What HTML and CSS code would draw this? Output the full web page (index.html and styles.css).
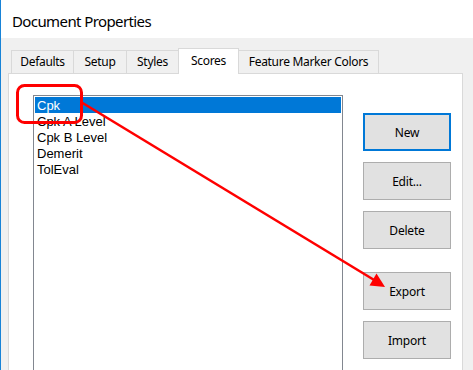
FILE: index.html
```html
<!DOCTYPE html>
<html lang="en">
<head>
  <meta charset="UTF-8">
  <title>Document Properties</title>
  <link rel="stylesheet" href="styles.css">
</head>
<body>
  <div class="window">
    <div class="title-bar">Document Properties</div>

    <div class="dialog">
      <div class="tabs">
        <div class="tab tab-defaults">Defaults</div>
        <div class="tab tab-setup">Setup</div>
        <div class="tab tab-styles">Styles</div>
        <div class="tab tab-scores active">Scores</div>
        <div class="tab tab-colors">Feature Marker Colors</div>
      </div>

      <div class="panel">
        <div class="list-box">
          <div class="list-item selected">Cpk</div>
          <div class="list-item">Cpk A Level</div>
          <div class="list-item">Cpk B Level</div>
          <div class="list-item">Demerit</div>
          <div class="list-item">TolEval</div>
        </div>

        <div class="buttons">
          <button class="btn default">New</button>
          <button class="btn">Edit...</button>
          <button class="btn">Delete</button>
          <button class="btn gap-top">Export</button>
          <button class="btn">Import</button>
        </div>
      </div>
    </div>
  </div>

  <!-- red callout drawn over the dialog -->
  <svg class="annotation" width="473" height="370" viewBox="0 0 473 370">
    <rect x="17.5" y="85.5" width="64" height="37" rx="7" ry="7" fill="none" stroke="#ff0000" stroke-width="3"/>
    <line x1="81" y1="102" x2="375" y2="280.5" stroke="#ff0000" stroke-width="2.6"/>
    <polygon points="385,287 369.5,285.5 376.5,273.5" fill="#ff0000"/>
  </svg>
</body>
</html>
```

FILE: styles.css
```css
body {
  margin: 0;
  width: 473px;
  height: 370px;
  overflow: hidden;
  position: relative;
  font-family: "Noto Sans", "Open Sans", Arial, sans-serif;
  font-size: 12px;
  color: #000;
  background-color: #f0f0f0;
}
.window {
  height: 370px;
  border-left: 1px solid #1883d7;
  box-sizing: border-box;
}
.title-bar {
  height: 34px;
  padding-top: 4px;
  background-color: #fff;
  padding-left: 11px;
  font-size: 15px;
  line-height: 34px;
  letter-spacing: -0.6px;
}
.dialog {
  padding-top: 10px;
  padding-left: 7px;
}
.tabs {
  display: flex;
  align-items: flex-end;
  padding-left: 3px;
  height: 25px;
}
.tab {
  height: 22px;
  line-height: 22px;
  text-align: center;
  background-color: #f0f0f0;
  border: 1px solid #d9d9d9;
  border-bottom: none;
  margin-right: -1px;
  letter-spacing: -0.3px;
  box-sizing: content-box;
}
.tab-defaults { width: 61px; }
.tab-setup { width: 52px; }
.tab-styles { width: 51px; }
.tab-scores { width: 59px; }
.tab-colors { width: 139px; }
.tab.active {
  height: 25px;
  line-height: 24px;
  background-color: #fff;
  position: relative;
  z-index: 1;
  margin-bottom: -1px;
}
.panel {
  display: flex;
  width: 455px;
  height: 300px;
  box-sizing: border-box;
  background-color: #fff;
  border: 1px solid #d9d9d9;
  padding: 21px 0 0 24px;
}
.list-box {
  width: 310px;
  height: 290px;
  box-sizing: border-box;
  border: 1px solid #828790;
  padding: 1px;
  font-family: "Liberation Sans", Arial, sans-serif;
  font-size: 13px;
}
.list-item {
  height: 14px;
  padding-top: 2px;
  line-height: 14px;
  padding-left: 2px;
}
.list-item.selected {
  background-color: #0078d7;
  color: #fff;
}
.buttons {
  display: flex;
  flex-direction: column;
  margin-left: 20px;
  padding-top: 18px;
  gap: 11px;
}
.btn {
  width: 88px;
  height: 38px;
  font-family: inherit;
  font-size: 12px;
  color: #000;
  background-color: #e1e1e1;
  border: 1px solid #adadad;
  padding: 0;
  letter-spacing: -0.2px;
}
.btn.default {
  border: 2px solid #0078d7;
}
.btn.gap-top {
  margin-top: 12px;
}
.annotation {
  position: absolute;
  left: 0;
  top: 0;
  pointer-events: none;
}
```
